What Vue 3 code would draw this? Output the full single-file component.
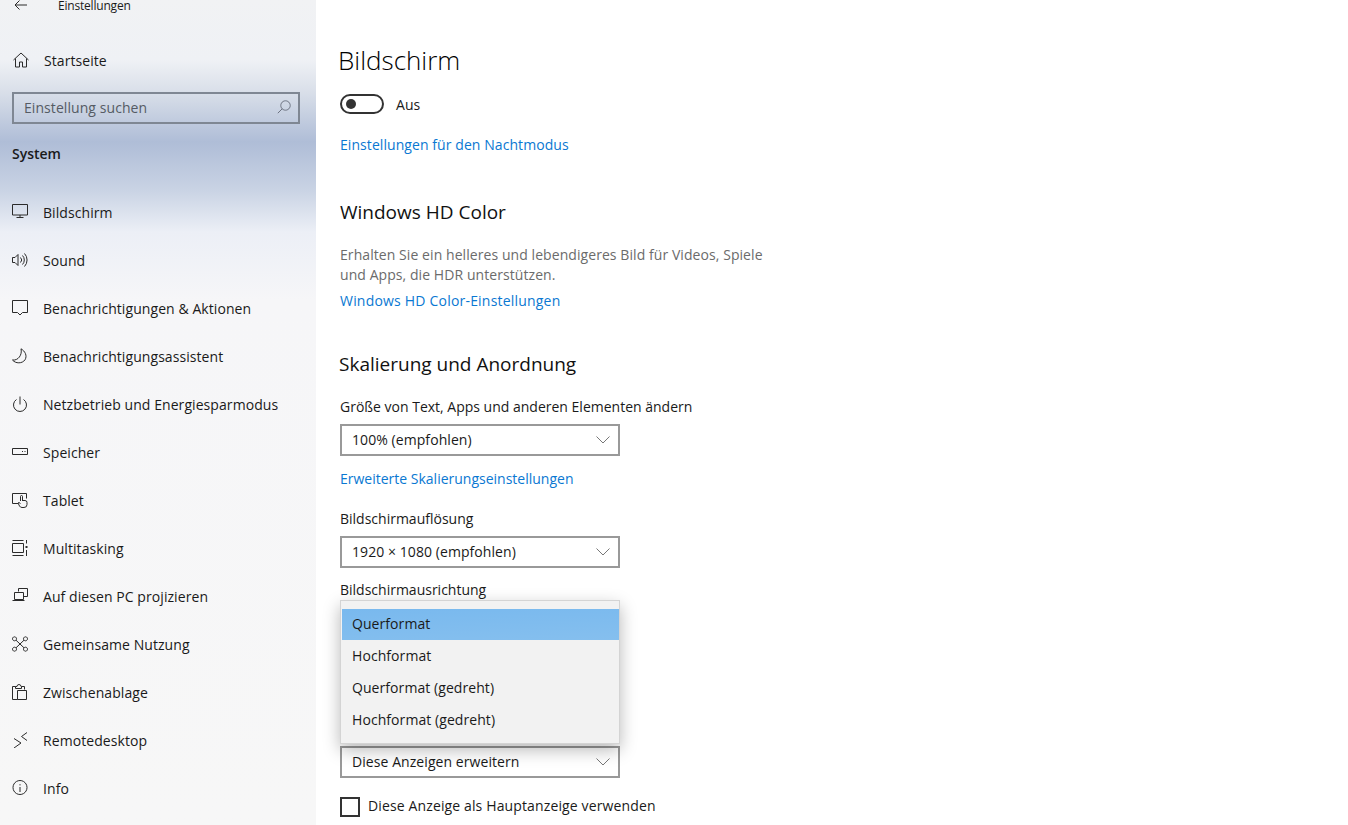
<script setup>
const nav = [
  { label: 'Bildschirm', paths: ['M.5 .5h15v10.5h-15z', 'M8 11v2.5', 'M4.5 13.5h7'] },
  { label: 'Sound', paths: ['M.5 5.5h2.5l3-3v11l-3-3H.5z', 'M8.5 5.5a3.5 3.5 0 0 1 0 5', 'M10.5 3.5a6.5 6.5 0 0 1 0 9', 'M12.5 1.5a9.5 9.5 0 0 1 0 13'] },
  { label: 'Benachrichtigungen & Aktionen', paths: ['M.5 .5h15v12h-5l-2.5 2.5-2.5-2.5h-5z'] },
  { label: 'Benachrichtigungsassistent', paths: ['M9 .8c4 2.2 6.5 7 4 11-2.700 4-9.500 4-12.500.2 5.500.8 10-5 8.500-11.200z'] },
  { label: 'Netzbetrieb und Energiesparmodus', paths: ['M8 .5v8', 'M4.500 3.500a6.500 6.500 0 1 0 7 0'] },
  { label: 'Speicher', paths: ['M.5 4.500h15v6h-15z', 'M10 7.500h1M12.500 7.500h1'] },
  { label: 'Tablet', paths: ['M6 11.500H.5v-10h14v5', 'M8.500 9V4.500a1 1 0 0 1 2 0V9', 'M10.500 8.500h2.500a2 2 0 0 1 2 2v2a3 3 0 0 1-3 3H10a3 3 0 0 1-2.500-1.500L6 11l1-.5 1.500 1'] },
  { label: 'Multitasking', paths: ['M.5 .5h11', 'M.5 15.500h11', 'M.5 3.500h11v9H.5z', 'M14.500 0v3.500', 'M13.500 6.500h2M13.500 7.500h2', 'M14.500 10v6'] },
  { label: 'Auf diesen PC projizieren', paths: ['M6.500 3.500V.5h9v8h-4', 'M2.500 4.500h9v7h-9z', 'M.5 12.500h12'] },
  { label: 'Gemeinsame Nutzung', paths: ['M2.500 .8a2 2 0 1 0 .01 0z', 'M13.500 .8a2 2 0 1 0 .01 0z', 'M2.500 11.200a2 2 0 1 0 .01 0z', 'M13.500 11.200a2 2 0 1 0 .01 0z', 'M4 4.200l8 7.600', 'M12 4.200l-8 7.600'] },
  { label: 'Zwischenablage', paths: ['M5.500 15.500H.5v-13h3', 'M9.500 2.500h3v3', 'M3.500 4.500v-2h1.500a2 2 0 0 1 4 0h.5v2z', 'M5.500 6.500h9v9h-9z'] },
  { label: 'Remotedesktop', paths: ['M2 6.500l7 4.500-7 5', 'M15 .5L9.500 4.500l5.500 4'] },
  { label: 'Info', paths: ['M8 .5a7 7 0 1 0 .01 0z', 'M8 7v5', 'M8 4.200v1.200'] }
]
const options = ['Querformat', 'Hochformat', 'Querformat (gedreht)', 'Hochformat (gedreht)']
</script>

<template>
  <div class="page">
    <aside class="side">
      <div class="top">
        <svg class="back" width="14" height="10" viewBox="0 0 14 10"><path d="M13 5H1M5.500 .5L1 5l4.500 4.500" /></svg>
        <span>Einstellungen</span>
      </div>
      <div class="home">
        <svg class="ico" width="16" height="16" viewBox="0 0 16 16"><path d="M.5 8L8 1l7.500 7M2.500 6.500v8.500h4v-5h3v5h4V6.500" /></svg>
        <span>Startseite</span>
      </div>
      <div class="search">
        <span>Einstellung suchen</span>
        <svg width="14" height="14" viewBox="0 0 14 14"><path d="M8.500 .8a4.700 4.700 0 1 0 .01 0zM5.200 8.800L.8 13.200" /></svg>
      </div>
      <div class="system">System</div>
      <ul class="nav">
        <li v-for="item in nav" :key="item.label">
          <svg class="ico" width="16" height="16" viewBox="0 0 16 16"><path v-for="d in item.paths" :key="d" :d="d" /></svg>
          <span>{{ item.label }}</span>
        </li>
      </ul>
    </aside>
    <main class="main">
      <h1>Bildschirm</h1>
      <div class="toggle-row">
        <span class="toggle"><i></i></span>
        <span>Aus</span>
      </div>
      <a class="link night">Einstellungen für den Nachtmodus</a>
      <h2 class="hd">Windows HD Color</h2>
      <p class="desc">Erhalten Sie ein helleres und lebendigeres Bild für Videos, Spiele und Apps, die HDR unterstützen.</p>
      <a class="link hdlink">Windows HD Color-Einstellungen</a>
      <h2 class="scale">Skalierung und Anordnung</h2>
      <div class="label first">Größe von Text, Apps und anderen Elementen ändern</div>
      <div class="select">
        <span>100% (empfohlen)</span>
        <svg width="14" height="8" viewBox="0 0 14 8"><path d="M.5 .5L7 7l6.500-6.500" /></svg>
      </div>
      <a class="link adv">Erweiterte Skalierungseinstellungen</a>
      <div class="label res">Bildschirmauflösung</div>
      <div class="select">
        <span>1920 × 1080 (empfohlen)</span>
        <svg width="14" height="8" viewBox="0 0 14 8"><path d="M.5 .5L7 7l6.500-6.500" /></svg>
      </div>
      <div class="label orient">Bildschirmausrichtung</div>
      <div class="slot">
        <ul class="menu">
          <li v-for="(o, i) in options" :key="o" :class="{ sel: i === 0 }">{{ o }}</li>
        </ul>
      </div>
      <div class="select">
        <span>Diese Anzeigen erweitern</span>
        <svg width="14" height="8" viewBox="0 0 14 8"><path d="M.5 .5L7 7l6.500-6.500" /></svg>
      </div>
      <label class="check"><i></i><span>Diese Anzeige als Hauptanzeige verwenden</span></label>
    </main>
  </div>
</template>

<style>
html, body { margin: 0; background: #fff; overflow: hidden; }
</style>

<style scoped>
.page {
  display: flex;
  width: 1348px;
  height: 825px;
  overflow: hidden;
  font-family: "Open Sans", "Noto Sans", sans-serif;
  font-size: 14px;
  letter-spacing: .07px;
  color: #1a1a1a;
}
svg { fill: none; stroke: #2b2b2b; stroke-width: 1; flex: none; }
.side {
  width: 316px;
  flex: none;
  background: linear-gradient(180deg, #f1f2f4 0, #eff1f5 60px, #d9dfe9 92px, #afbdd7 142px, #c9d3e4 190px, #ecEff6 232px, #f6f6f8 300px, #f7f7f7 825px);
}
.top {
  height: 10px;
  display: flex;
  align-items: center;
  padding-left: 14px;
  font-size: 12px;
  letter-spacing: -.2px;
}
.top span { margin-left: 30px; }
.home {
  display: flex;
  align-items: center;
  height: 24px;
  margin-top: 38px;
  padding-left: 13px;
}
.home span { margin-left: 15px; }
.search {
  margin: 20px 16px 0 12px;
  height: 32px;
  box-sizing: border-box;
  border: 2px solid #7f8793;
  display: flex;
  align-items: center;
  justify-content: space-between;
  padding: 0 7px 2px 10px;
  color: #555b64;
}
.search svg { stroke: #6c7280; }
.system {
  margin: 18px 0 0 12px;
  height: 24px;
  line-height: 24px;
  font-weight: 600;
  letter-spacing: 0;
}
.nav { list-style: none; margin: 22px 0 0; padding: 0; }
.nav li {
  display: flex;
  align-items: center;
  height: 48px;
  padding-left: 12px;
}
.nav span { margin-left: 15px; }
.main { flex: 1; padding-left: 24px; }
h1 {
  margin: 43px 0 0 -2px;
  font-size: 26px;
  line-height: 34px;
  font-weight: 300;
  letter-spacing: 0;
  color: #000;
}
.toggle-row {
  display: flex;
  align-items: center;
  gap: 12px;
  margin-top: 17px;
  height: 20px;
}
.toggle {
  width: 44px;
  height: 20px;
  box-sizing: border-box;
  border: 2px solid #333;
  border-radius: 10px;
  display: flex;
  align-items: center;
  padding-left: 4px;
}
.toggle i { width: 10px; height: 10px; border-radius: 50%; background: #333; }
.link { display: block; color: #0a78d2; height: 20px; line-height: 20px; }
.night { margin-top: 21px; }
h2 { font-weight: 400; font-size: 19px; line-height: 26px; margin: 0; letter-spacing: 0; color: #111; }
.hd { margin-top: 44px; }
.desc {
  margin: 20px 0 0;
  width: 440px;
  line-height: 20px;
  color: #6b6b6b;
}
.hdlink { margin-top: 6px; letter-spacing: .2px; }
.scale { margin-top: 40px; margin-left: -1px; }
.label { height: 20px; line-height: 20px; letter-spacing: 0; }
.first { margin-top: 20px; }
.select {
  margin-top: 7px;
  width: 280px;
  height: 32px;
  box-sizing: border-box;
  border: 2px solid #999;
  display: flex;
  align-items: center;
  justify-content: space-between;
  padding: 0 8px 1px 10px;
}
.select svg { stroke: #777; }
.adv { margin-top: 13px; letter-spacing: 0; }
.res { margin-top: 20px; }
.orient { margin-top: 12px; }
.slot { position: relative; height: 139px; }
.menu {
  position: absolute;
  left: 0;
  top: 0;
  width: 280px;
  height: 144px;
  box-sizing: border-box;
  margin: 0;
  padding: 8px 0 0 1px;
  list-style: none;
  background: #f2f2f2;
  border: 1px solid #d4d4d4;
  box-shadow: 0 6px 16px rgba(0, 0, 0, .28);
}
.menu li { height: 32px; line-height: 30px; padding-left: 10px; }
.menu .sel { height: 31px; margin-bottom: 1px; background: linear-gradient(178deg, #79b9ee, #85bfee); }
.check {
  display: flex;
  align-items: center;
  gap: 8px;
  margin-top: 19px;
  letter-spacing: .13px;
}
.check span { position: relative; top: -2px; }
.check i {
  width: 20px;
  height: 20px;
  box-sizing: border-box;
  border: 2px solid #333;
}
</style>
